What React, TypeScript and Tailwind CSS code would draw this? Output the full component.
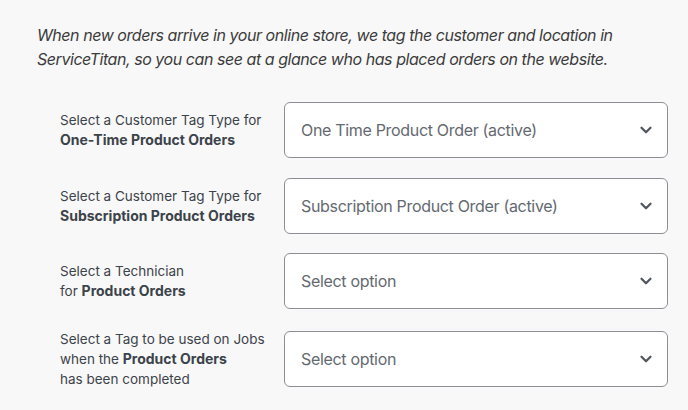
import { ChevronDown } from "lucide-react";

type Row = {
  label: React.ReactNode;
  value: string;
};

const rows: Row[] = [
  {
    label: (
      <>
        Select a Customer Tag Type for
        <br />
        <b className="text-[14px] font-bold">One-Time Product Orders</b>
      </>
    ),
    value: "One Time Product Order (active)",
  },
  {
    label: (
      <>
        Select a Customer Tag Type for
        <br />
        <b className="text-[14px] font-bold">Subscription Product Orders</b>
      </>
    ),
    value: "Subscription Product Order (active)",
  },
  {
    label: (
      <>
        Select a Technician
        <br />
        for <b className="text-[14px] font-bold">Product Orders</b>
      </>
    ),
    value: "Select option",
  },
  {
    label: (
      <>
        Select a Tag to be used on Jobs
        <br />
        when the <b className="text-[14px] font-bold">Product Orders</b>
        <br />
        has been completed
      </>
    ),
    value: "Select option",
  },
];

export default function App() {
  return (
    <div className="min-h-[410px] w-[688px] bg-[#f8f8f8] font-['Inter','Liberation_Sans',sans-serif]">
      <div className="px-[37px] pt-[23px]">
        <p className="text-[16px] italic leading-[24px] tracking-[-0.028em] text-[#3c3c3c]">
          When new orders arrive in your online store, we tag the customer and location in
          <br />
          ServiceTitan, so you can see at a glance who has placed orders on the website.
        </p>
      </div>

      <div className="mt-[31px] flex flex-col gap-[19.5px] pl-[60px]">
        {rows.map((row, i) => (
          <div key={i} className="flex items-center">
            <div className="w-[224px] text-[13.5px] leading-[20px] text-[#3c434a]">
              {row.label}
            </div>
            <SelectBox value={row.value} />
          </div>
        ))}
      </div>
    </div>
  );
}

function SelectBox({ value }: { value: string }) {
  return (
    <div className="flex h-[56px] w-[384px] items-center justify-between rounded-[6px] border border-[#8c8f94] bg-white pl-[16px] pr-[12px]">
      <span className="text-[16px] tracking-[-0.02em] text-[#646970]">{value}</span>
      <ChevronDown size={18} strokeWidth={3} className="text-[#50575e]" />
    </div>
  );
}
